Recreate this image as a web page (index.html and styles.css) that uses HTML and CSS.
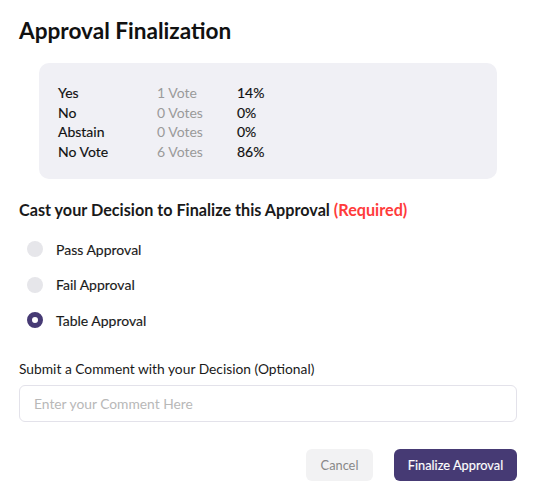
FILE: index.html
```html
<!DOCTYPE html>
<html>
<head>
<meta charset="utf-8">
<link rel="stylesheet" href="styles.css">
</head>
<body>
<div class="dialog">
  <h1 class="title">Approval Finalization</h1>
  <div class="summary">
    <div class="row"><span class="lbl">Yes</span><span class="votes">1 Vote</span><span class="pct">14%</span></div>
    <div class="row"><span class="lbl">No</span><span class="votes">0 Votes</span><span class="pct">0%</span></div>
    <div class="row"><span class="lbl">Abstain</span><span class="votes">0 Votes</span><span class="pct">0%</span></div>
    <div class="row"><span class="lbl">No Vote</span><span class="votes">6 Votes</span><span class="pct">86%</span></div>
  </div>
  <h2 class="heading">Cast your Decision to Finalize this Approval <span class="req">(Required)</span></h2>
  <div class="options">
    <div class="option"><span class="radio"></span><span class="opt-label">Pass Approval</span></div>
    <div class="option"><span class="radio"></span><span class="opt-label">Fail Approval</span></div>
    <div class="option"><span class="radio checked"></span><span class="opt-label">Table Approval</span></div>
  </div>
  <div class="comment-label">Submit a Comment with your Decision (Optional)</div>
  <div class="input"><span class="placeholder">Enter your Comment Here</span></div>
  <div class="actions">
    <button class="btn cancel">Cancel</button>
    <button class="btn primary">Finalize Approval</button>
  </div>
</div>
</body>
</html>
```

FILE: styles.css
```css
* { box-sizing: border-box; }
html, body { margin: 0; padding: 0; background: #fff; }
body {
  font-family: Lato, "Noto Sans", sans-serif;
  color: #1a1a1a;
  width: 540px;
  height: 500px;
  overflow: hidden;
}
.dialog {
  padding: 17px 23px 0 19px;
  display: flex;
  flex-direction: column;
}
.title {
  margin: 0;
  font-size: 22.6px;
  font-weight: 700;
  line-height: 28px;
  color: #111;
}
.summary {
  margin: 18px 20px 0 20px;
  background: #f0f0f5;
  border-radius: 10px;
  padding: 20px 19px 18px 19px;
  display: flex;
  flex-direction: column;
}
.row {
  display: grid;
  grid-template-columns: 99px 80px auto;
  font-size: 14px;
  line-height: 19.5px;
}
.lbl, .pct {
  color: #111;
  -webkit-text-stroke: 0.15px currentColor;
}
.votes { color: #9a9a9a; }
.heading {
  margin: 20px 0 0 0;
  font-size: 16.2px;
  font-weight: 700;
  line-height: 22px;
  color: #1a1a1a;
}
.req { color: #ff3b3b; }
.options {
  display: flex;
  flex-direction: column;
  gap: 15.5px;
  margin-top: 18px;
  padding-left: 8px;
}
.option {
  display: flex;
  align-items: center;
  gap: 13px;
  height: 20px;
  font-size: 14px;
  color: #1a1a1a;
}
.opt-label { -webkit-text-stroke: 0.15px currentColor; }
.radio {
  width: 16px;
  height: 16px;
  border-radius: 50%;
  background: #e6e6ea;
  flex: none;
}
.radio.checked {
  background: #fff;
  border: 5px solid #463a74;
}
.comment-label {
  margin-top: 29px;
  font-size: 13.8px;
  line-height: 20px;
  color: #1a1a1a;
}
.input {
  margin-top: 6px;
  height: 37px;
  border: 1.5px solid #e3e2ea;
  border-radius: 6px;
  display: flex;
  align-items: center;
  padding-left: 14px;
}
.placeholder { font-size: 13.8px; color: #b8b8b8; }
.actions {
  display: flex;
  justify-content: flex-end;
  gap: 21px;
  margin-top: 27px;
}
.btn {
  font-family: Lato, "Noto Sans", sans-serif;
  font-size: 12.8px;
  height: 32px;
  border: none;
  border-radius: 6px;
  padding: 0;
  white-space: nowrap;
}
.cancel {
  background: #f2f2f3;
  color: #888;
  width: 67px;
}
.primary {
  background: #463a74;
  color: #fff;
  width: 123px;
  -webkit-text-stroke: 0.15px currentColor;
}
```
